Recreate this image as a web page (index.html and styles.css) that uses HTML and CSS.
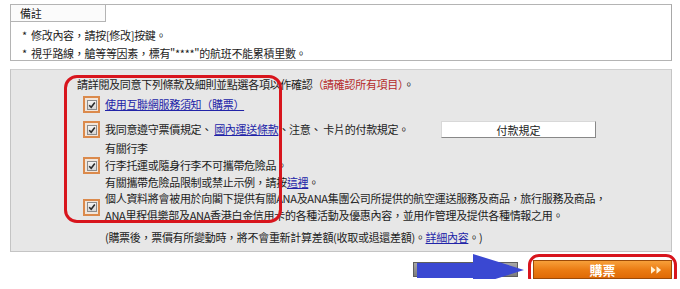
FILE: index.html
```html
<!DOCTYPE html>
<html lang="zh-Hant">
<head>
    <meta charset="UTF-8">
    <meta name="viewport" content="width=device-width, initial-scale=1.0">
    <title>購票確認</title>
    <link rel="stylesheet" href="styles.css">
</head>
<body>
    <div class="page">
        <div class="remarks">
            <div class="remarks-title">備註</div>
            <ul class="remarks-list">
                <li>修改內容，請按[修改]按鍵。</li>
                <li>視乎路線，艙等等因素，標有"****"的航班不能累積里數。</li>
            </ul>
        </div>

        <div class="terms">
            <p class="terms-intro">請詳閱及同意下列條款及細則並點選各項以作確認<span class="warn">（請確認所有項目）</span>。</p>

            <div class="term-row">
                <span class="check"><span class="check-box"><svg viewBox="0 0 8 8"><path d="M1.2 4.2 L3.2 6.2 L6.8 1.6" /></svg></span></span>
                <div class="term-text"><a href="#">使用互聯網服務須知（購票）</a></div>
            </div>

            <div class="term-row row-pay">
                <span class="check"><span class="check-box"><svg viewBox="0 0 8 8"><path d="M1.2 4.2 L3.2 6.2 L6.8 1.6" /></svg></span></span>
                <div class="term-text">我同意遵守票價規定、 <a href="#">國內運送條款</a>、注意、 卡片的付款規定。</div>
                <button class="pay-btn">付款規定</button>
            </div>

            <div class="term-row row-bag">
                <span class="check"><span class="check-box"><svg viewBox="0 0 8 8"><path d="M1.2 4.2 L3.2 6.2 L6.8 1.6" /></svg></span></span>
                <div class="term-text">
                    有關行李<br>
                    行李托運或隨身行李不可攜帶危險品。<br>
                    有關攜帶危險品限制或禁止示例，請按<a href="#">這裡</a>。
                </div>
            </div>

            <div class="term-row row-privacy">
                <span class="check"><span class="check-box"><svg viewBox="0 0 8 8"><path d="M1.2 4.2 L3.2 6.2 L6.8 1.6" /></svg></span></span>
                <div class="term-text">
                    個人資料將會被用於向閣下提供有關ANA及ANA集團公司所提供的航空運送服務及商品，旅行服務及商品，<br>
                    ANA里程俱樂部及ANA香港白金信用卡的各種活動及優惠內容，並用作管理及提供各種情報之用。
                </div>
            </div>

            <p class="terms-note">(購票後，票價有所變動時，將不會重新計算差額(收取或退還差額)。<a href="#">詳細內容</a>。)</p>

            <div class="mark-ring terms-ring"></div>
        </div>

        <div class="actions">
            <button class="back-btn"></button>
            <button class="buy-btn">
                <span>購票</span>
                <svg class="buy-arrows" viewBox="0 0 12 8"><path d="M0 0 L5 4 L0 8 Z M6 0 L11 4 L6 8 Z" /></svg>
            </button>
            <svg class="blue-arrow" viewBox="0 0 120 33"><path d="M12 9 H68 V0 L119 16 L68 32 V24 H12 Z" /></svg>
            <div class="mark-ring buy-ring"></div>
        </div>
    </div>
</body>
</html>
```

FILE: styles.css
```css
* {
    box-sizing: border-box;
}
body {
    margin: 0;
    background: #fff;
    color: #1c1c1c;
    font-family: "Noto Sans CJK TC", "Liberation Sans", sans-serif;
    font-size: 11px;
    letter-spacing: -0.3px;
}
a {
    color: #2224a8;
    text-decoration: underline;
}
.page {
    width: 680px;
    padding: 4px 8px 0 10px;
}

/* remarks */
.remarks {
    height: 57px;
    border: 1px solid #b4b4b4;
    border-right-color: #a8a8a8;
}
.remarks-title {
    width: 95px;
    height: 17px;
    line-height: 16px;
    padding-left: 9px;
    border-right: 1px solid #b4b4b4;
    border-bottom: 1px solid #b4b4b4;
    background: #fbfbfb;
}
.remarks-list {
    list-style: none;
    margin: 0;
    padding: 4px 0 0 11px;
}
.remarks-list li {
    line-height: 18px;
}
.remarks-list li::before {
    content: "*";
    display: inline-block;
    width: 9px;
}

/* terms */
.terms {
    position: relative;
    height: 183px;
    margin-top: 8px;
    padding: 6px 0 0 72px;
    background: #e7e7e7;
    border: 1px solid #c4c4c4;
    border-top-color: #cfcfcf;
}
.terms-intro {
    margin: 0 0 0 -6px;
    line-height: 17px;
}
.warn {
    color: #b52a2a;
}
.term-row {
    display: flex;
    align-items: center;
    gap: 5px;
    line-height: 17px;
}
.term-row:first-of-type {
    margin-top: 3px;
}
.row-pay {
    margin-top: 8px;
}
.row-bag {
    margin-top: 2px;
}
.row-privacy {
    margin-top: -1px;
}
.term-text {
    white-space: nowrap;
}
.check {
    display: flex;
    align-items: center;
    justify-content: center;
    width: 17px;
    height: 17px;
    flex-shrink: 0;
    border: 2px solid #db8a4c;
    background: #f1e6dc;
}
.check-box {
    display: flex;
    width: 10px;
    height: 10px;
    border: 1px solid #8c8c8c;
    background: linear-gradient(#f4f4f4, #d6d6d6);
}
.check-box svg {
    width: 8px;
    height: 8px;
    fill: none;
    stroke: #2b2b2b;
    stroke-width: 1.6;
}
.pay-btn {
    width: 155px;
    height: 17px;
    margin-left: 27px;
    padding: 0;
    font: inherit;
    color: #222;
    background: #fff;
    border: 1px solid #888;
    border-top-color: #d8d8d8;
    border-left-color: #d8d8d8;
}
.terms-note {
    margin: 5px 0 0 22px;
    line-height: 17px;
}

/* annotation rings */
.mark-ring {
    position: absolute;
    border: 3px solid #d8151d;
    border-radius: 13px;
    pointer-events: none;
}
.terms-ring {
    left: 53px;
    top: 5px;
    width: 218px;
    height: 148px;
}

/* actions */
.actions {
    position: relative;
    display: flex;
    align-items: center;
    justify-content: flex-end;
    gap: 15px;
    height: 19px;
    margin-top: 8px;
}
.back-btn {
    width: 105px;
    height: 15px;
    padding: 0;
    border: 1px solid #5e5e5e;
    background: linear-gradient(#a8a8a8, #7c7c7c);
}
.buy-btn {
    position: relative;
    width: 139px;
    height: 19px;
    padding: 0;
    font: inherit;
    font-size: 13px;
    font-weight: bold;
    line-height: 17px;
    color: #fff;
    border: 1px solid #9c4a08;
    background: linear-gradient(#f7a03a, #ea7a12 55%, #df6a06);
}
.buy-arrows {
    position: absolute;
    right: 9px;
    top: 5px;
    width: 11px;
    height: 8px;
    fill: #fff2d6;
}
.blue-arrow {
    position: absolute;
    left: 395px;
    top: -6px;
    width: 120px;
    height: 33px;
    fill: #3a48d2;
}
.buy-ring {
    left: 518px;
    top: -6px;
    width: 149px;
    height: 34px;
    border-radius: 11px;
}
```
